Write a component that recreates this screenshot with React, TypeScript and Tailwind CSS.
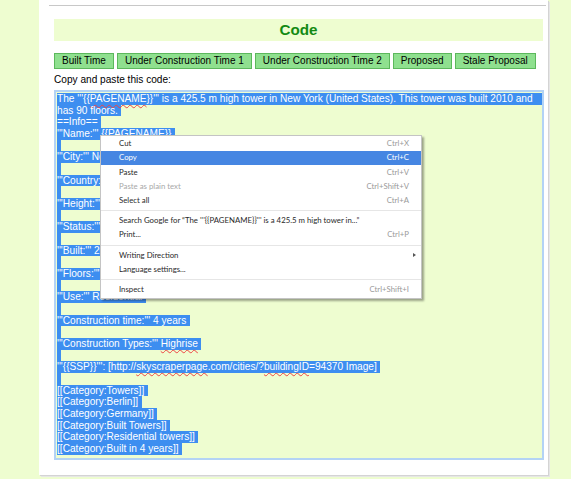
import React from 'react';

const SEL = 'bg-[#3d8ef0] text-white';
const SPELL = 'underline decoration-wavy decoration-[#e44] decoration-[0.8px] underline-offset-[1.5px]';

const Typo = ({ children }: { children: React.ReactNode }) => <span className={SPELL}>{children}</span>;

const lines: (React.ReactNode | null)[] = [
  "'''Name:''' {{PAGENAME}}",
  null,
  "'''City:''' New York",
  null,
  "'''Country:''' United States",
  null,
  "'''Height:''' 425.5 m",
  null,
  "'''Status:''' Built",
  null,
  "'''Built:''' 2010",
  null,
  "'''Floors:''' 90",
  null,
  "'''Use:''' Residential",
  null,
  "'''Construction time:''' 4 years",
  null,
  <>
    '''Construction Types:''' <Typo>Highrise</Typo>
  </>,
  null,
  <>
    '''{'{{'}SSP{'}}'}''': [http://<Typo>skyscraperpage</Typo>.com/cities/?<Typo>buildingID</Typo>=94370 Image]
  </>,
  null,
  '[[Category:Towers]]',
  '[[Category:Berlin]]',
  '[[Category:Germany]]',
  '[[Category:Built Towers]]',
  '[[Category:Residential towers]]',
  '[[Category:Built in 4 years]]',
];

const buttons = ['Built Time', 'Under Construction Time 1', 'Under Construction Time 2', 'Proposed', 'Stale Proposal'];

type MenuItem =
  | { sep: true }
  | { label: string; key?: string; disabled?: boolean; active?: boolean; arrow?: boolean; sep?: false };

const menu: MenuItem[] = [
  { label: 'Cut', key: 'Ctrl+X' },
  { label: 'Copy', key: 'Ctrl+C', active: true },
  { label: 'Paste', key: 'Ctrl+V' },
  { label: 'Paste as plain text', key: 'Ctrl+Shift+V', disabled: true },
  { label: 'Select all', key: 'Ctrl+A' },
  { sep: true },
  { label: 'Search Google for \u201cThe \'\'\'{{PAGENAME}}\'\'\' is a 425.5 m high tower in...\u201d' },
  { label: 'Print...', key: 'Ctrl+P' },
  { sep: true },
  { label: 'Writing Direction', arrow: true },
  { label: 'Language settings...' },
  { sep: true },
  { label: 'Inspect', key: 'Ctrl+Shift+I' },
];

// chrome-style right click menu, sits on top of the textarea
const ContextMenu = () => (
  <div className="absolute left-[100px] top-[135px] w-[322px] border border-[#c4c4c4] bg-white py-px shadow-[2px_2px_2px_rgba(0,0,0,0.35)] font-['Lato','Open_Sans',sans-serif] text-[7.8px]">
    {menu.map((m, i) =>
      m.sep ? (
        <div key={i} className="flex h-[6px] items-center">
          <div className="h-px w-full bg-[#e6e6e6]" />
        </div>
      ) : (
        <div
          key={i}
          className={`flex h-[14.2px] items-center justify-between pl-[18px] pr-[12px] ${
            m.active ? 'bg-[#4686e2] text-white' : m.disabled ? 'text-[#a8a8a8]' : 'text-[#2a2a2a]'
          }`}
        >
          <span className="whitespace-nowrap">{m.label}</span>
          {m.key && <span className={m.active ? 'text-white' : 'text-[#9a9a9a]'}>{m.key}</span>}
          {m.arrow && (
            <span className="-mr-[7px] h-0 w-0 border-y-[2.5px] border-l-[3px] border-y-transparent border-l-[#555]" />
          )}
        </div>
      )
    )}
  </div>
);

export default function App() {
  return (
    <div className="relative h-[479px] w-full overflow-hidden bg-[#eefdd0] font-['Liberation_Sans',Arial,sans-serif] text-black">
      <div className="ml-[39px] h-[475px] w-[509px] bg-white pt-[5px] shadow-[1px_1px_0_#d4d4d4,2px_2px_0_#e6e6e6]">
        <div className="ml-[10px] mr-[2px] h-px bg-[#c8c8c8]" />
        <div className="pl-[15px] pr-[5px]">
          <div className="mt-[13px] flex h-[22px] items-center justify-center bg-[#eefdd0] text-[15.2px] font-bold text-[#138a13]">
            Code
          </div>

          <div className="mt-[12px] flex gap-[3px]">
            {buttons.map((b) => (
              <button
                key={b}
                className="h-[16px] border border-[#5cb85c] bg-[#8fe08f] px-[7px] text-[10px] leading-none text-black"
              >
                {b}
              </button>
            ))}
          </div>

          <div className="mt-[5px] text-[10.12px] leading-[11.67px]">Copy and paste this code:</div>

          <div className="-mr-px mt-[4px] h-[370px] border-2 border-[#b3d3f5] bg-[#eefdd0] pl-px pt-[1.5px] text-[10.15px] leading-[11.67px]">
            <div className={`${SEL} h-[11.67px] w-full whitespace-nowrap`}>
              The '''{'{{'}<Typo>PAGENAME</Typo>{'}}'}''' is a 425.5 m high tower in New York (United States). This tower was
              built 2010 and
            </div>
            <div className={`${SEL} h-[11.67px] w-fit whitespace-nowrap pr-[3.5px]`}>has 90 floors.</div>
            <div className={`${SEL} h-[11.67px] w-fit whitespace-nowrap pr-[3.5px]`}>==Info==</div>
            {lines.map((l, i) =>
              l === null ? (
                <div key={i} className={`${SEL} h-[11.67px] w-[3.5px]`} />
              ) : (
                <div key={i} className={`${SEL} h-[11.67px] w-fit whitespace-nowrap pr-[3.5px]`}>
                  {l}
                </div>
              )
            )}
          </div>
        </div>
      </div>
      <ContextMenu />
    </div>
  );
}
